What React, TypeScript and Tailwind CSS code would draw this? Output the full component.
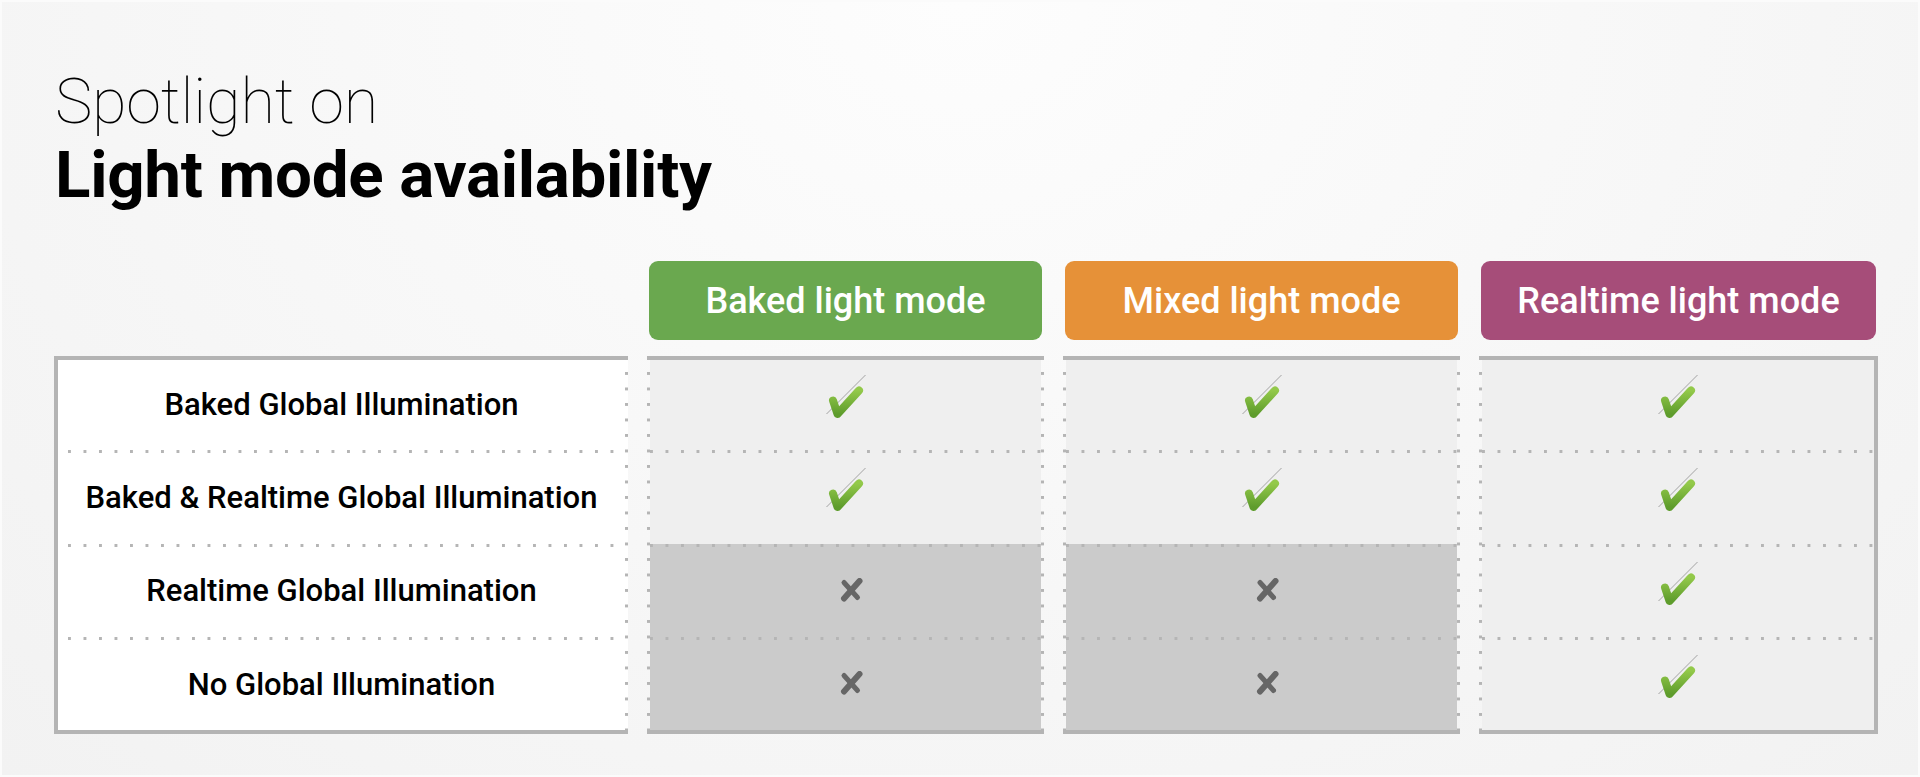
import React from "react";

type Column = {
  title: string;
  pill: string;
  cells: boolean[];
  last?: boolean;
};

const rows = [
  "Baked Global Illumination",
  "Baked & Realtime Global Illumination",
  "Realtime Global Illumination",
  "No Global Illumination",
];

const columns: Column[] = [
  { title: "Baked light mode", pill: "bg-[#6aa84f]", cells: [true, true, false, false] },
  { title: "Mixed light mode", pill: "bg-[#e69138]", cells: [true, true, false, false] },
  { title: "Realtime light mode", pill: "bg-[#a64d79]", cells: [true, true, true, true], last: true },
];

function Check() {
  return (
    <svg width="40" height="60" viewBox="0 0 40 60" fill="none">
      <defs>
        <linearGradient id="chk" x1="0" y1="0" x2="0" y2="1">
          <stop offset="0%" stopColor="#93c94a" />
          <stop offset="100%" stopColor="#5e9c2c" />
        </linearGradient>
      </defs>
      <line x1="0.5" y1="39" x2="39.5" y2="0" stroke="#9a9a9a" strokeWidth="0.9" />
      <polyline
        points="7,25.5 11.5,39 33,15.5"
        stroke="url(#chk)"
        strokeWidth="8"
        strokeLinecap="round"
        strokeLinejoin="round"
      />
    </svg>
  );
}

function Cross() {
  return (
    <svg width="24" height="24" viewBox="0 0 24 24" fill="none" className="ml-[13px] mt-[-3px]">
      <line x1="4" y1="4.5" x2="17.5" y2="19.5" stroke="#666666" strokeWidth="5" strokeLinecap="round" />
      <line x1="4" y1="20.5" x2="19.5" y2="3" stroke="#666666" strokeWidth="6" strokeLinecap="round" />
    </svg>
  );
}

function DotsV() {
  return (
    <div className="w-[3px] shrink-0 self-stretch bg-[linear-gradient(to_bottom,#b5b5b5_3px,transparent_3px)] bg-[length:3px_15.5px] bg-[position:0_12px] bg-repeat-y" />
  );
}

function DotsH({ bg }: { bg: string }) {
  return (
    <div className={`h-[3px] shrink-0 bg-[linear-gradient(to_right,#b5b5b5_3px,transparent_3px)] bg-[length:15.5px_3px] bg-repeat-x ${bg}`} />
  );
}

export default function App() {
  return (
    <div className="h-[777px] w-full overflow-hidden border-2 border-[#fbfbfb] bg-[radial-gradient(ellipse_at_50%_0%,#fdfdfd_0%,#f2f2f2_100%)] font-['Roboto',sans-serif] text-[#111]">
      <div className="pl-[53px] pt-[68px]">
        <h1 className="text-[63px] font-thin leading-[63px] tracking-[-0.2px] text-black">Spotlight on</h1>
        <h2 className="mt-[9px] text-[65.5px] font-bold leading-[66px] tracking-[-0.3px] text-black">Light mode availability</h2>
      </div>

      <div className="mt-[53px] grid grid-cols-[574px_397px_397px_399px] gap-x-[19px] gap-y-[16px] pl-[52px]">
        <div />
        {columns.map((c) => (
          <div
            key={c.title}
            className={`mx-[2px] flex h-[79px] items-center justify-center rounded-[9px] text-[36px] font-medium text-white ${c.pill}`}
          >
            {c.title}
          </div>
        ))}

        {/* row labels */}
        <div className="flex h-[378px] border-y-4 border-l-4 border-[#b4b4b4] bg-white">
          <div className="flex flex-1 flex-col">
            {rows.map((r, i) => (
              <React.Fragment key={r}>
                {i > 0 && <DotsH bg="ml-[10px]" />}
                <div className="flex flex-1 items-center justify-center text-[31px] font-medium text-black">
                  {r}
                </div>
              </React.Fragment>
            ))}
          </div>
          <DotsV />
        </div>

        {columns.map((c) => (
          <div
            key={c.title}
            className={`flex h-[378px] border-y-4 border-[#b4b4b4] ${c.last ? "border-r-4" : ""}`}
          >
            <DotsV />
            <div className="flex flex-1 flex-col">
              {c.cells.map((ok, i) => (
                <React.Fragment key={i}>
                  {i > 0 && <DotsH bg={ok ? "bg-[#efefef]" : "bg-[#cbcbcb]"} />}
                  <div className={`flex flex-1 items-center justify-center ${ok ? "bg-[#efefef]" : "bg-[#cbcbcb]"}`}>
                    {ok ? <Check /> : <Cross />}
                  </div>
                </React.Fragment>
              ))}
            </div>
            {!c.last && <DotsV />}
          </div>
        ))}
      </div>
    </div>
  );
}
